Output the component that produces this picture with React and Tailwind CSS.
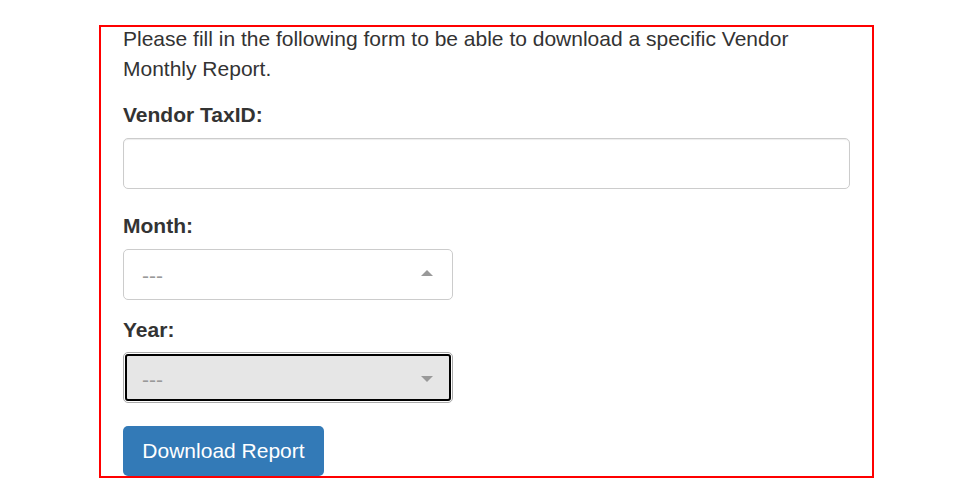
export default function App() {
  return (
    <div className="min-h-screen bg-white pt-[25px] font-['Liberation_Sans',Arial,sans-serif] text-[#333]">
      <div className="ml-[99px] h-[453px] w-[775px] border-2 border-[#ff0000] px-[22px]">
        <p className="-mt-[3px] text-[21px] leading-[30px]">
          Please fill in the following form to be able to download a specific Vendor Monthly Report.
        </p>

        <label className="mt-[16px] block text-[21px] font-bold leading-[30px]">Vendor TaxID:</label>
        <div className="mt-[8px] h-[51px] w-full rounded-[5px] border border-[#ccc] bg-white shadow-[inset_0_1px_1px_rgba(0,0,0,0.075)]" />

        <label className="mt-[22px] block text-[21px] font-bold leading-[30px]">Month:</label>
        <div className="mt-[8px] flex h-[51px] w-[330px] items-center justify-between rounded-[5px] border border-[#ccc] bg-white pl-[18px] pr-[19px]">
          <span className="pt-[2px] text-[21px] text-[#999]">---</span>
          <svg width="12" height="6" viewBox="0 0 12 6" className="-mt-[3px]">
            <polygon points="0,6 12,6 6,0" fill="#999" />
          </svg>
        </div>

        <label className="mt-[15px] block text-[21px] font-bold leading-[30px]">Year:</label>
        <div className="mt-[7px] h-[51px] w-[330px] rounded-[5px] border border-[#aaa] p-px">
          <div className="flex h-full items-center justify-between rounded-[3px] border-2 border-black bg-[#e6e6e6] pl-[15px] pr-[16px]">
            <span className="pt-[4px] text-[21px] text-[#999]">---</span>
            <svg width="12" height="6" viewBox="0 0 12 6" className="mt-[3px]">
              <polygon points="0,0 12,0 6,6" fill="#999" />
            </svg>
          </div>
        </div>

        <button className="mt-[23px] h-[50px] w-[201px] rounded-[5px] bg-[#337ab7] text-[21px] text-white">
          Download Report
        </button>
      </div>
    </div>
  );
}
